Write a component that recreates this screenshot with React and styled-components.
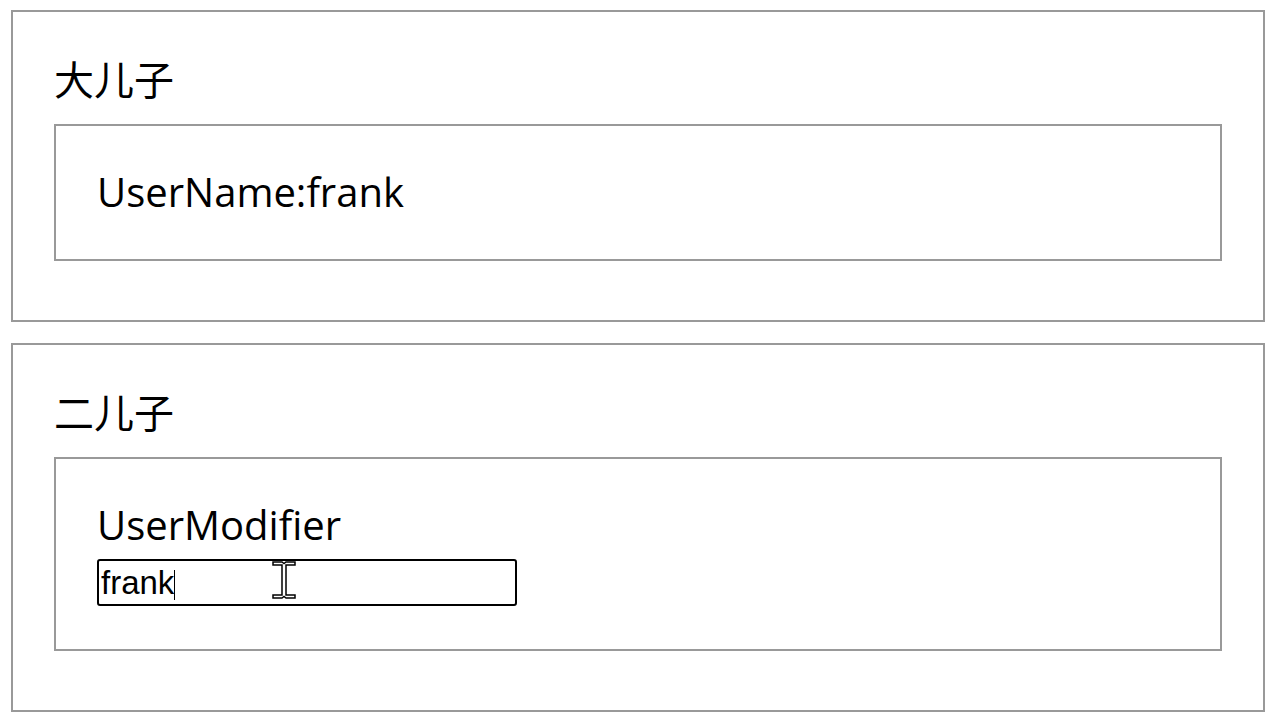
import React from "react";
import styled, { createGlobalStyle } from "styled-components";

const Global = createGlobalStyle`
  html, body { margin: 0; padding: 0; background: #fff; }
  body { font-family: "Open Sans", "Noto Sans CJK SC", sans-serif; color: #000; }
`;

const Page = styled.div`
  display: flex;
  flex-direction: column;
  gap: 21px;
  padding: 10px 0 0 11px;
`;

const Outer = styled.section`
  box-sizing: border-box;
  width: 1254px;
  border: 2px solid #999;
  padding: 46px 41px 59px;
`;

const Title = styled.h1`
  margin: 0 0 26px;
  font-family: "Noto Sans CJK SC", sans-serif;
  font-weight: 400;
  font-size: 40px;
  line-height: 40px;
`;

const Inner = styled.div`
  border: 2px solid #999;
  padding: 41px 41px 42px;
`;

const Line = styled.div`
  font-family: "Open Sans", sans-serif;
  font-size: 40px;
  line-height: 50px;
`;

const InputWrap = styled.div`
  position: relative;
  width: 420px;
  margin: 9px 0 1px;
`;

const TextInput = styled.input`
  box-sizing: border-box;
  display: block;
  width: 420px;
  height: 47px;
  border: 2px solid #000;
  border-radius: 3px;
  padding: 0 2px;
  font-family: "Liberation Sans", Arial, sans-serif;
  font-size: 33px;
  color: #000;
  background: #fff;
  outline: none;
`;

const Caret = styled.span`
  position: absolute;
  left: 77px;
  top: 11px;
  width: 1px;
  height: 30px;
  background: #000;
`;

const Pointer = styled.svg`
  position: absolute;
  left: 175px;
  top: 2px;
`;

export default function App() {
  return (
    <>
      <Global />
      <Page>
        <Outer>
          <Title>大儿子</Title>
          <Inner>
            <Line>UserName:frank</Line>
          </Inner>
        </Outer>
        <Outer>
          <Title>二儿子</Title>
          <Inner>
            <Line>UserModifier</Line>
            <InputWrap>
              <TextInput defaultValue="frank" readOnly />
              <Caret />
              <Pointer width="24" height="38" viewBox="0 0 24 38">
                <path
                  d="M1 1 H10 L12 2.5 L14 1 H23 V4 H14 V34 H23 V37 H14 L12 35.5 L10 37 H1 V34 H10 V4 H1 Z"
                  fill="#fff"
                  stroke="#000"
                  strokeWidth="1.5"
                  strokeLinejoin="miter"
                />
              </Pointer>
            </InputWrap>
          </Inner>
        </Outer>
      </Page>
    </>
  );
}
